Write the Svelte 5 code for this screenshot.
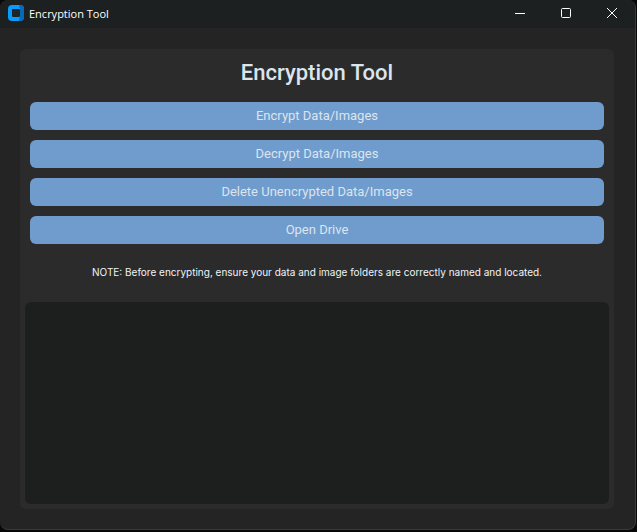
<script>
  let log = $state('');
  const actions = [
    'Encrypt Data/Images',
    'Decrypt Data/Images',
    'Delete Unencrypted Data/Images',
    'Open Drive'
  ];
</script>

<div class="window">
  <header>
    <svg class="logo" viewBox="0 0 16 16" aria-hidden="true">
      <rect width="16" height="16" rx="4" fill="#0a9bff" />
      <path d="M12 0a4 4 0 0 1 4 4v8a4 4 0 0 1-4 4l-1-1 1-3V4l-1-3z" fill="#0868b8" />
      <rect x="4" y="4" width="8" height="8" rx="1" fill="#1c2527" />
    </svg>
    <span class="caption">Encryption Tool</span>
    <button class="control" aria-label="Minimize">
      <svg viewBox="0 0 12 12"><path d="M1 6.5h10" /></svg>
    </button>
    <button class="control" aria-label="Maximize">
      <svg viewBox="0 0 12 12"><rect x="1.5" y="1.5" width="9" height="9" rx="1" /></svg>
    </button>
    <button class="control" aria-label="Close">
      <svg viewBox="0 0 12 12"><path d="M1 1l10 10M11 1L1 11" /></svg>
    </button>
  </header>

  <main>
    <section class="panel">
      <h1>Encryption Tool</h1>
      <div class="actions">
        {#each actions as action}
          <button class="action">{action}</button>
        {/each}
      </div>
      <p>NOTE: Before encrypting, ensure your data and image folders are correctly named and located.</p>
      <textarea aria-label="Output log" bind:value={log}></textarea>
    </section>
  </main>
</div>

<style>
  :global(body) {
    margin: 0;
    background: #080808;
  }

  .window {
    box-sizing: border-box;
    display: flex;
    flex-direction: column;
    height: calc(100vh - 2px);
    margin-right: 1px;
    border: solid #3a3a3a;
    border-width: 0 1px 1px 0;
    border-radius: 8px;
    background: #242424;
    overflow: hidden;
    font-family: Roboto, sans-serif;
  }

  header {
    display: flex;
    align-items: center;
    height: 28px;
    padding-left: 8px;
    background: #1c2020;
    color: #fff;
  }

  .logo {
    width: 16px;
    height: 16px;
    margin-bottom: 2px;
  }

  .caption {
    flex: 1;
    margin-left: 5px;
    font: 11px/16px "Open Sans", "Noto Sans", sans-serif;
  }

  .control {
    display: grid;
    place-items: center;
    width: 46px;
    height: 26px;
    margin-bottom: 2px;
    padding: 0;
    border: 0;
    background: none;
  }

  .control svg {
    width: 12px;
    height: 12px;
    fill: none;
    stroke: #fff;
    stroke-width: 1;
  }

  main {
    flex: 1;
    display: flex;
    padding: 21px 21px 20px 20px;
  }

  .panel {
    flex: 1;
    display: flex;
    flex-direction: column;
    padding: 10px 5px 5px;
    border-radius: 6px;
    background: #2b2b2b;
  }

  h1 {
    margin: 0 0 15px;
    color: #dce4ee;
    font-size: 22px;
    font-weight: 500;
    line-height: 28px;
    text-align: center;
  }

  .actions {
    display: flex;
    flex-direction: column;
    gap: 10px;
    padding: 0 5px;
  }

  .action {
    height: 28px;
    padding: 0;
    border: 0;
    border-radius: 6px;
    background: #6f9ccd;
    color: #dce4ee;
    font: 13px/28px Roboto, sans-serif;
  }

  p {
    margin: 20px 0 22px;
    color: #f0f4f8;
    font: 10px/16px Inter, "Liberation Sans", sans-serif;
    text-align: center;
  }

  textarea {
    flex: 1;
    box-sizing: border-box;
    padding: 8px;
    border: 0;
    border-radius: 6px;
    outline: 0;
    resize: none;
    background: #1d1e1e;
    color: #dce4ee;
    font: 13px/18px Roboto, sans-serif;
  }
</style>
